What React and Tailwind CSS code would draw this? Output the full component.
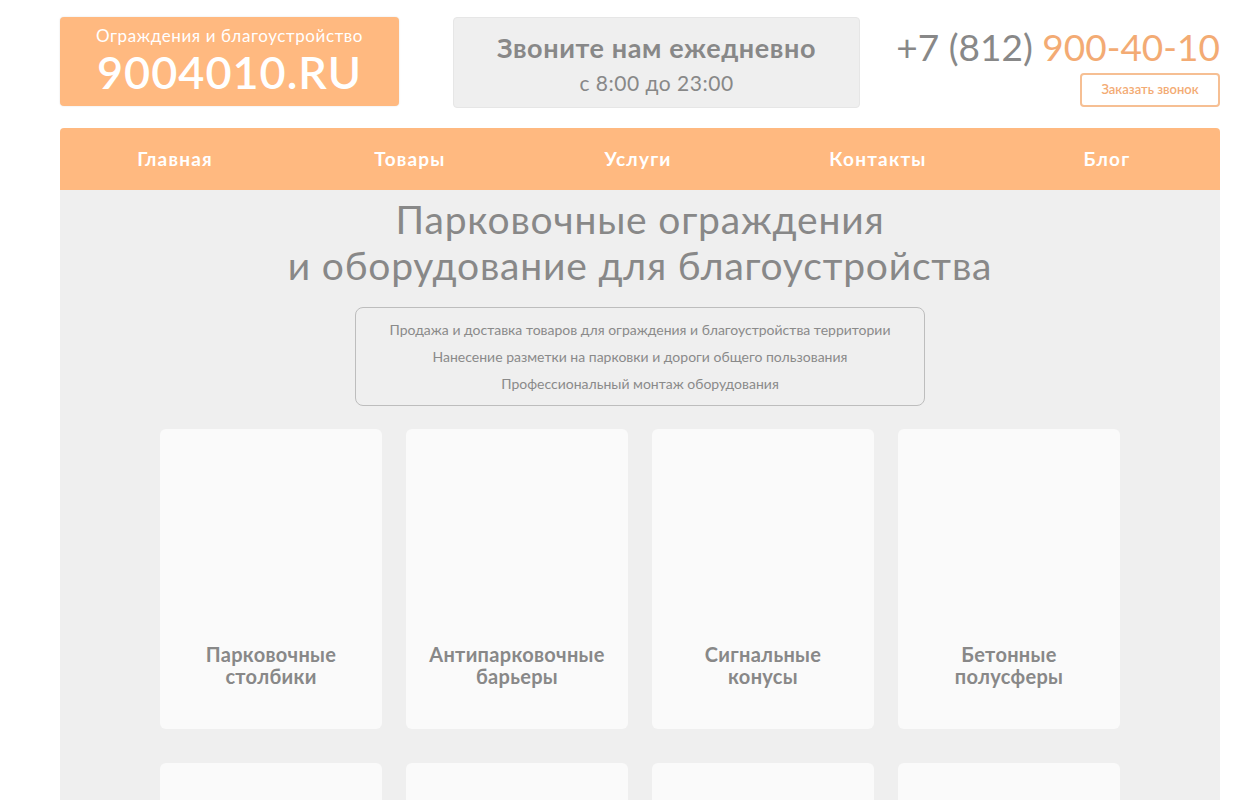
import React from 'react'

const nav = ['Главная', 'Товары', 'Услуги', 'Контакты', 'Блог']
const navX = ['w-[230px]', 'w-[240px]', 'w-[216px]', 'w-[264px]', 'w-[194px]']

const cats = [
  ['Парковочные', 'столбики'],
  ['Антипарковочные', 'барьеры'],
  ['Сигнальные', 'конусы'],
  ['Бетонные', 'полусферы'],
  ['', ''],
  ['', ''],
  ['', ''],
  ['', ''],
]

function App() {
  return (
    <div className="min-h-screen bg-white font-['Lato','Noto_Sans',sans-serif] text-[#888]">
      <div className="ml-[60px] w-[1160px] pt-[17px]">
        <header className="flex items-start">
          <div className="w-[339px] h-[89px] bg-[#ffb980] rounded-[4px] shadow-[0_0_2px_rgba(0,0,0,0.12)] flex flex-col items-center text-white">
            <div className="text-[17px] leading-[18px] mt-[10px] tracking-[0.6px]">Ограждения и благоустройство</div>
            <div className="text-[45px] leading-[42px] font-semibold tracking-[1px] mt-[6px]">9004010.RU</div>
          </div>
          <div className="ml-[54px] w-[407px] h-[91px] bg-[#efefef] rounded-[4px] border border-[#e6e6e6] flex flex-col items-center">
            <div className="text-[27px] leading-[30px] font-bold mt-[15px] tracking-[0.6px]">Звоните нам ежедневно</div>
            <div className="text-[21px] leading-[24px] mt-[8px] tracking-[0.5px]">с 8:00 до 23:00</div>
          </div>
          <div className="ml-auto flex flex-col items-end">
            <div className="text-[37px] leading-[44px] mt-[8px]">
              <span>+7 (812) </span>
              <span className="text-[#f3ab74]">900-40-10</span>
            </div>
            <button className="mt-[4px] w-[140px] h-[34px] border-2 border-[#f6bf93] rounded-[4px] text-[13px] text-[#f3ab74] font-semibold">Заказать звонок</button>
          </div>
        </header>

        <nav className="mt-[20px] h-[62px] bg-[#ffb980] rounded-t-[4px] flex items-center text-white text-[19px] font-bold tracking-[1.2px]">
          {nav.map((n, i) => (
            <div key={n} className={`${navX[i]} text-center`}>{n}</div>
          ))}
        </nav>

        <main className="bg-[#efefef] pb-[40px] flex flex-col items-center">
          <h1 className="mt-[6px] text-[39px] leading-[46px] text-center tracking-[0.8px]">
            Парковочные ограждения<br />и оборудование для благоустройства
          </h1>
          <div className="mt-[19px] w-[570px] h-[99px] border border-[#bdbdbd] rounded-[8px] flex flex-col items-center justify-center text-[14px] leading-[27px] text-[#8a8a8a]">
            <div>Продажа и доставка товаров для ограждения и благоустройства территории</div>
            <div>Нанесение разметки на парковки и дороги общего пользования</div>
            <div>Профессиональный монтаж оборудования</div>
          </div>
          <div className="mt-[23px] grid grid-cols-4 gap-x-[24px] gap-y-[34px] w-[960px]">
            {cats.map((c, i) => (
              <div key={i} className="h-[300px] bg-[#fafafa] rounded-[6px] flex flex-col items-center justify-end pb-[42px] text-[20px] leading-[22px] font-bold text-center tracking-[0.3px]">
                <div>{c[0]}</div>
                <div>{c[1]}</div>
              </div>
            ))}
          </div>
        </main>
      </div>
    </div>
  )
}

export default App
